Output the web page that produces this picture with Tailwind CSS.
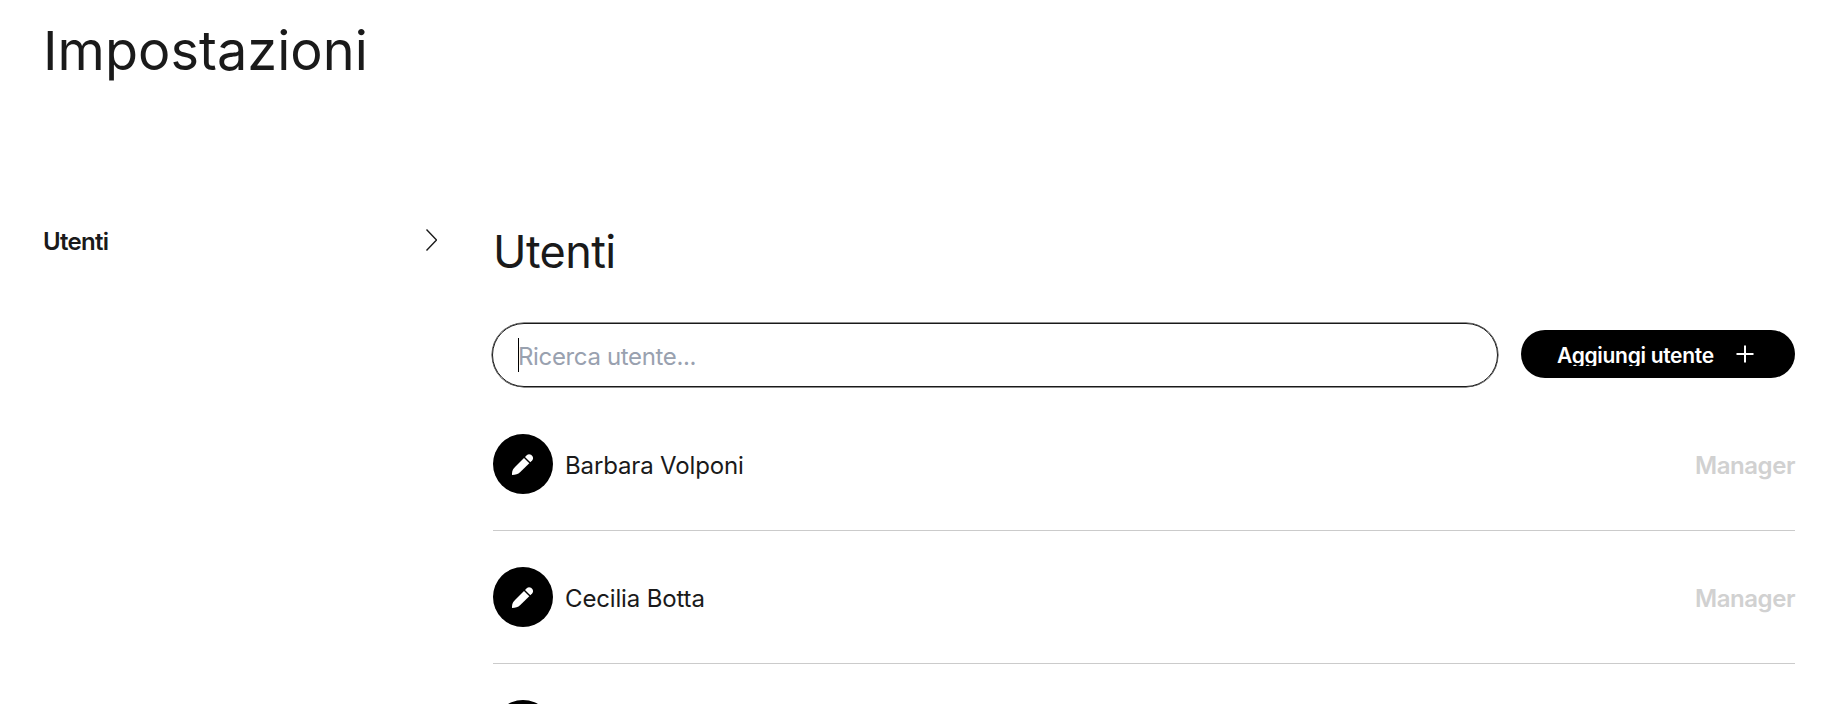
<!DOCTYPE html>
<html lang="it">
<head>
  <meta charset="UTF-8">
  <meta name="viewport" content="width=device-width, initial-scale=1">
  <title>Impostazioni</title>
  <script src="https://cdn.jsdelivr.net/npm/@tailwindcss/browser@4"></script>
</head>
<body class="h-screen overflow-hidden bg-white pl-[43px] pr-[42px] font-['Inter',sans-serif] text-[#1a1a1a]">

  <header class="h-[222px] pt-[18px]">
    <h1 class="text-[54px] leading-[66px] font-[440] tracking-[0.05px]">Impostazioni</h1>
  </header>

  <div class="flex">
    <nav class="w-[450px] shrink-0 pr-[56px]">
      <a href="#" class="flex items-center justify-between text-2xl leading-[40px] font-semibold tracking-[-0.7px]">
        <span>Utenti</span>
        <svg class="-mt-1 h-6 w-3" viewBox="0 0 12 24" fill="none" stroke="currentColor" stroke-width="1.4">
          <path d="M1.500 1.500 11.500 12 1.500 22.500" />
        </svg>
      </a>
    </nav>

    <main class="min-w-0 flex-1">
      <h2 class="h-[100px] pt-[3px] text-[45px] leading-[54px] font-[440] tracking-[-0.6px]">Utenti</h2>

      <div class="flex items-center">
        <div class="my-px -ml-px flex h-[64px] flex-1 items-center rounded-full border border-[#1a1a1a] pl-[25px] ring-[0.5px] ring-[#1a1a1a]">
          <span class="h-[34px] w-px bg-black"></span>
          <span class="mt-[3px] -ml-px text-2xl tracking-[-0.35px] text-gray-400">Ricerca utente...</span>
        </div>
        <button class="-mt-0.5 ml-[23px] flex h-12 w-[274px] items-center rounded-full bg-black pl-[36px] text-white">
          <span class="mt-0.5 h-[21px] w-[179px] overflow-hidden text-left text-[21px] leading-[21px] font-semibold tracking-[-0.3px]">Aggiungi utente</span>
          <svg class="h-[18px] w-[18px]" viewBox="0 0 18 18" fill="none" stroke="currentColor" stroke-width="2">
            <path d="M9 .5v17M.5 9h17" />
          </svg>
        </button>
      </div>

      <ul id="userList" class="pt-[10px]"></ul>
    </main>
  </div>

  <script>
    const users = [
      { name: 'Barbara Volponi', role: 'Manager' },
      { name: 'Cecilia Botta', role: 'Manager' },
      { name: '', role: '' }
    ];

    document.getElementById('userList').innerHTML = users.map(user => `
      <li class="flex h-[133px] items-center border-b border-[#cbcbcb]">
        <button class="flex h-[60px] w-[60px] items-center justify-center rounded-full bg-black text-white">
          <svg class="-ml-px h-[21px] w-[21px] overflow-visible" viewBox="0 0 21 21" fill="currentColor">
            <path d="M0 21C0 17 .6 15.500 3 13L12 4 17.300 9.300 8.300 18C6 20.200 3.500 21 0 21Z" />
            <path d="M13 3 15 1C18-1.600 23 2.800 20.300 6.200L18.300 8.300Z" />
          </svg>
        </button>
        <span class="mt-[3px] ml-3 flex-1 text-2xl tracking-[-0.15px]">${user.name}</span>
        <span class="mt-[3px] text-2xl font-semibold tracking-[-0.45px] text-[#d1d1d1]">${user.role}</span>
      </li>`).join('');
  </script>
</body>
</html>
